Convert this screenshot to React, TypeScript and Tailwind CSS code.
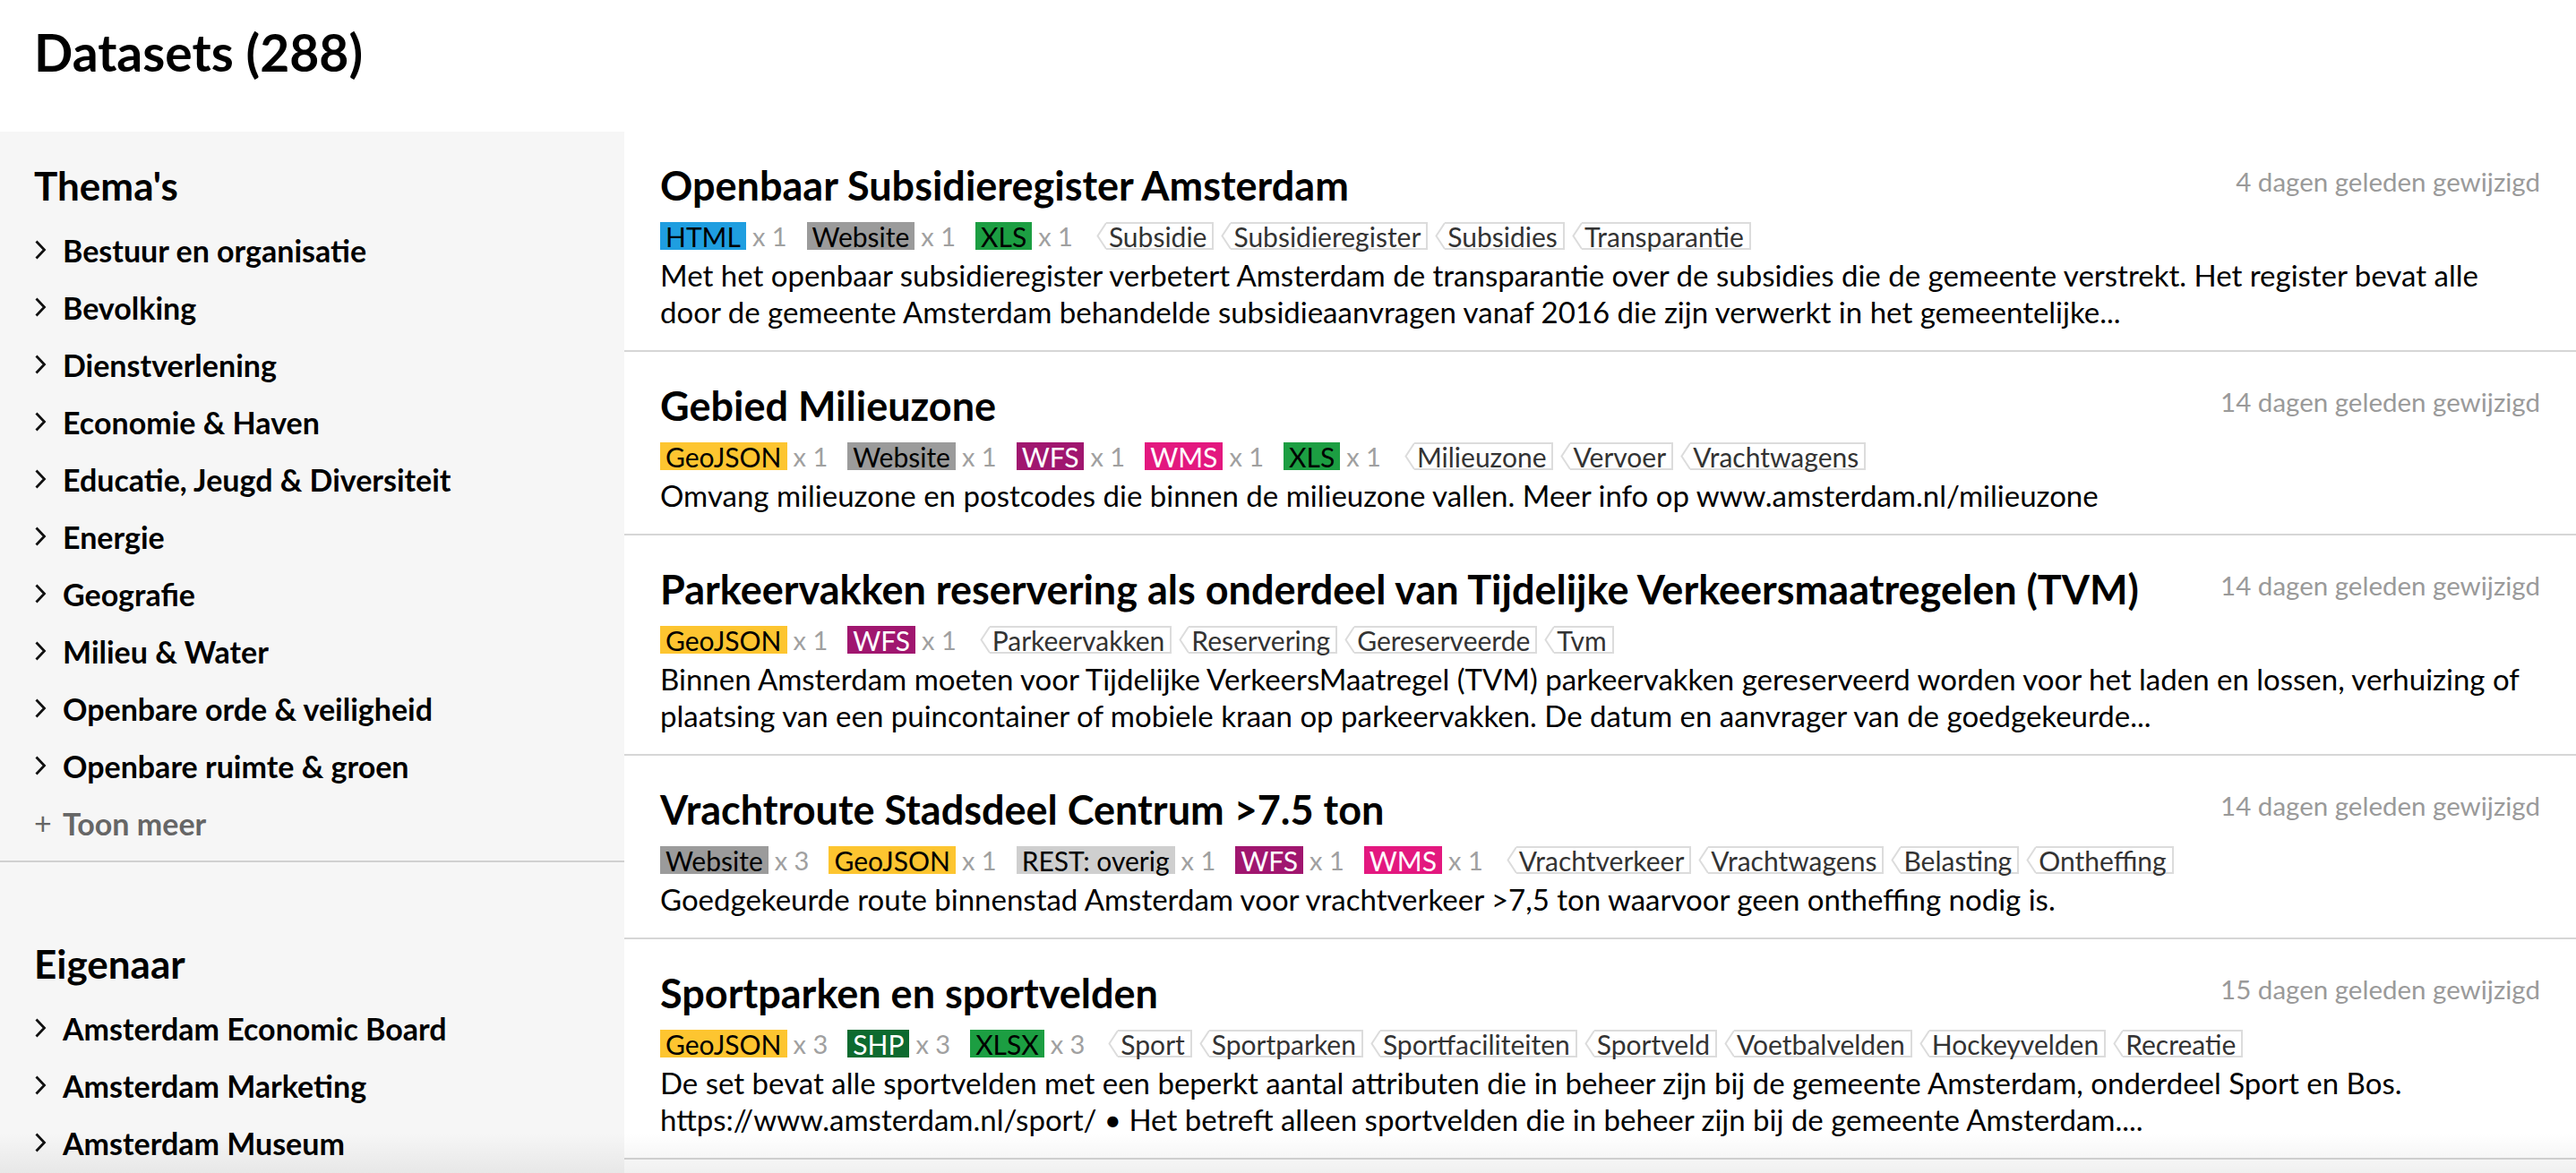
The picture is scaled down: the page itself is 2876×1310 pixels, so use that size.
const FORMAT_STYLES: Record<string, string> = {
  HTML: 'bg-[#1f9ee0] text-black',
  Website: 'bg-[#9b9b9b] text-black',
  XLS: 'bg-[#1c9e42] text-black',
  XLSX: 'bg-[#1c9e42] text-black',
  GeoJSON: 'bg-[#fdc530] text-black',
  WFS: 'bg-[#a0166f] text-white',
  WMS: 'bg-[#e3187f] text-white',
  'REST: overig': 'bg-[#cfcfcf] text-black',
  SHP: 'bg-[#0d6a2f] text-white',
}

type Dataset = {
  title: string
  date: string
  formats: [string, number][]
  keywords: string[]
  lines: string[]
}

const datasets: Dataset[] = [
  {
    title: 'Openbaar Subsidieregister Amsterdam',
    date: '4 dagen geleden gewijzigd',
    formats: [['HTML', 1], ['Website', 1], ['XLS', 1]],
    keywords: ['Subsidie', 'Subsidieregister', 'Subsidies', 'Transparantie'],
    lines: [
      'Met het openbaar subsidieregister verbetert Amsterdam de transparantie over de subsidies die de gemeente verstrekt. Het register bevat alle',
      'door de gemeente Amsterdam behandelde subsidieaanvragen vanaf 2016 die zijn verwerkt in het gemeentelijke...',
    ],
  },
  {
    title: 'Gebied Milieuzone',
    date: '14 dagen geleden gewijzigd',
    formats: [['GeoJSON', 1], ['Website', 1], ['WFS', 1], ['WMS', 1], ['XLS', 1]],
    keywords: ['Milieuzone', 'Vervoer', 'Vrachtwagens'],
    lines: ['Omvang milieuzone en postcodes die binnen de milieuzone vallen. Meer info op www.amsterdam.nl/milieuzone'],
  },
  {
    title: 'Parkeervakken reservering als onderdeel van Tijdelijke Verkeersmaatregelen (TVM)',
    date: '14 dagen geleden gewijzigd',
    formats: [['GeoJSON', 1], ['WFS', 1]],
    keywords: ['Parkeervakken', 'Reservering', 'Gereserveerde', 'Tvm'],
    lines: [
      'Binnen Amsterdam moeten voor Tijdelijke VerkeersMaatregel (TVM) parkeervakken gereserveerd worden voor het laden en lossen, verhuizing of',
      'plaatsing van een puincontainer of mobiele kraan op parkeervakken. De datum en aanvrager van de goedgekeurde...',
    ],
  },
  {
    title: 'Vrachtroute Stadsdeel Centrum >7.5 ton',
    date: '14 dagen geleden gewijzigd',
    formats: [['Website', 3], ['GeoJSON', 1], ['REST: overig', 1], ['WFS', 1], ['WMS', 1]],
    keywords: ['Vrachtverkeer', 'Vrachtwagens', 'Belasting', 'Ontheffing'],
    lines: ['Goedgekeurde route binnenstad Amsterdam voor vrachtverkeer >7,5 ton waarvoor geen ontheffing nodig is.'],
  },
  {
    title: 'Sportparken en sportvelden',
    date: '15 dagen geleden gewijzigd',
    formats: [['GeoJSON', 3], ['SHP', 3], ['XLSX', 3]],
    keywords: ['Sport', 'Sportparken', 'Sportfaciliteiten', 'Sportveld', 'Voetbalvelden', 'Hockeyvelden', 'Recreatie'],
    lines: [
      'De set bevat alle sportvelden met een beperkt aantal attributen die in beheer zijn bij de gemeente Amsterdam, onderdeel Sport en Bos.',
      'https://www.amsterdam.nl/sport/ • Het betreft alleen sportvelden die in beheer zijn bij de gemeente Amsterdam....',
    ],
  },
]

const themes = [
  'Bestuur en organisatie',
  'Bevolking',
  'Dienstverlening',
  'Economie & Haven',
  'Educatie, Jeugd & Diversiteit',
  'Energie',
  'Geografie',
  'Milieu & Water',
  'Openbare orde & veiligheid',
  'Openbare ruimte & groen',
]

const owners = ['Amsterdam Economic Board', 'Amsterdam Marketing', 'Amsterdam Museum']

function Chevron() {
  return (
    <svg width="14" height="24" viewBox="0 0 14 24" className="shrink-0">
      <path d="M2.5 2.5 L11.5 12 L2.5 21.5" fill="none" stroke="#111" strokeWidth="2.8" />
    </svg>
  )
}

function FacetItem({ label }: { label: string }) {
  return (
    <li className="flex items-center h-[64px] gap-[18px] text-[34px] font-bold text-black">
      <Chevron />
      <span>{label}</span>
    </li>
  )
}

function Keyword({ label }: { label: string }) {
  return (
    <span className="inline-flex items-stretch h-[31px]">
      <svg width="11" height="31" viewBox="0 0 11 31" className="shrink-0">
        <path d="M11 1 L1.5 15.5 L11 30" fill="#fff" stroke="#dcdcdc" strokeWidth="2" />
      </svg>
      <span className="flex items-center border-y-2 border-r-2 border-[#dcdcdc] pl-[3px] pr-[6px] text-[30px] leading-none text-[#333]">
        {label}
      </span>
    </span>
  )
}

function DatasetRow({ d }: { d: Dataset }) {
  return (
    <article className="border-b-2 border-[#d6d6d6] pt-[36px] pb-[22px] pl-[40px] pr-[40px]">
      <div className="flex items-start justify-between gap-8">
        <h2 className="text-[45px] leading-[48px] font-bold text-black whitespace-nowrap">{d.title}</h2>
        <span className="text-[29.5px] leading-[40px] text-[#9a9a9a] whitespace-nowrap">{d.date}</span>
      </div>
      <div className="mt-[17px] flex items-center h-[31px] whitespace-nowrap">
        {d.formats.map(([name, count]) => (
          <span key={name} className="inline-flex items-center mr-[22px]">
            <span className={`h-[31px] flex items-center px-[6px] text-[30px] leading-none ${FORMAT_STYLES[name]}`}>
              {name}
            </span>
            <span className="ml-[7px] text-[29px] text-[#a0a0a0]">x {count}</span>
          </span>
        ))}
        <span className="ml-[4px] inline-flex items-center gap-[8px]">
          {d.keywords.map((k) => (
            <Keyword key={k} label={k} />
          ))}
        </span>
      </div>
      <div className="mt-[8px] text-[33px] leading-[41px] text-black">
        {d.lines.map((l) => (
          <div key={l} className="whitespace-nowrap">
            {l}
          </div>
        ))}
      </div>
    </article>
  )
}

export default function App() {
  return (
    <div className="relative h-[1310px] overflow-hidden bg-white font-['Lato',sans-serif]">
      <header className="h-[147px] pt-[28px] px-[38px]">
        <h1 className="text-[57px] leading-[60px] font-bold text-black">Datasets (288)</h1>
      </header>

      <div className="flex">
        <aside className="w-[697px] shrink-0 bg-[#f6f6f6] min-h-[1200px]">
          <section className="px-[38px] pt-[36px] pb-[10px] border-b-2 border-[#d0d0d0]">
            <h3 className="text-[44px] leading-[48px] font-bold text-black">Thema's</h3>
            <ul className="mt-[16px]">
              {themes.map((t) => (
                <FacetItem key={t} label={t} />
              ))}
              <li className="flex items-center h-[64px] gap-[18px] text-[34px] font-bold text-[#666]">
                <span className="w-[14px] text-center text-[34px] font-normal leading-none">+</span>
                <span>Toon meer</span>
              </li>
            </ul>
          </section>
          <section className="px-[38px] pt-[89px]">
            <h3 className="text-[44px] leading-[48px] font-bold text-black">Eigenaar</h3>
            <ul className="mt-[16px]">
              {owners.map((o) => (
                <FacetItem key={o} label={o} />
              ))}
            </ul>
          </section>
        </aside>

        <main className="flex-1 min-w-0">
          {datasets.map((d) => (
            <DatasetRow key={d.title} d={d} />
          ))}
        </main>
      </div>

      {/* fade at the bottom edge */}
      <div className="pointer-events-none absolute inset-x-0 bottom-0 h-[44px] bg-gradient-to-b from-transparent to-black/[0.06]" />
    </div>
  )
}
